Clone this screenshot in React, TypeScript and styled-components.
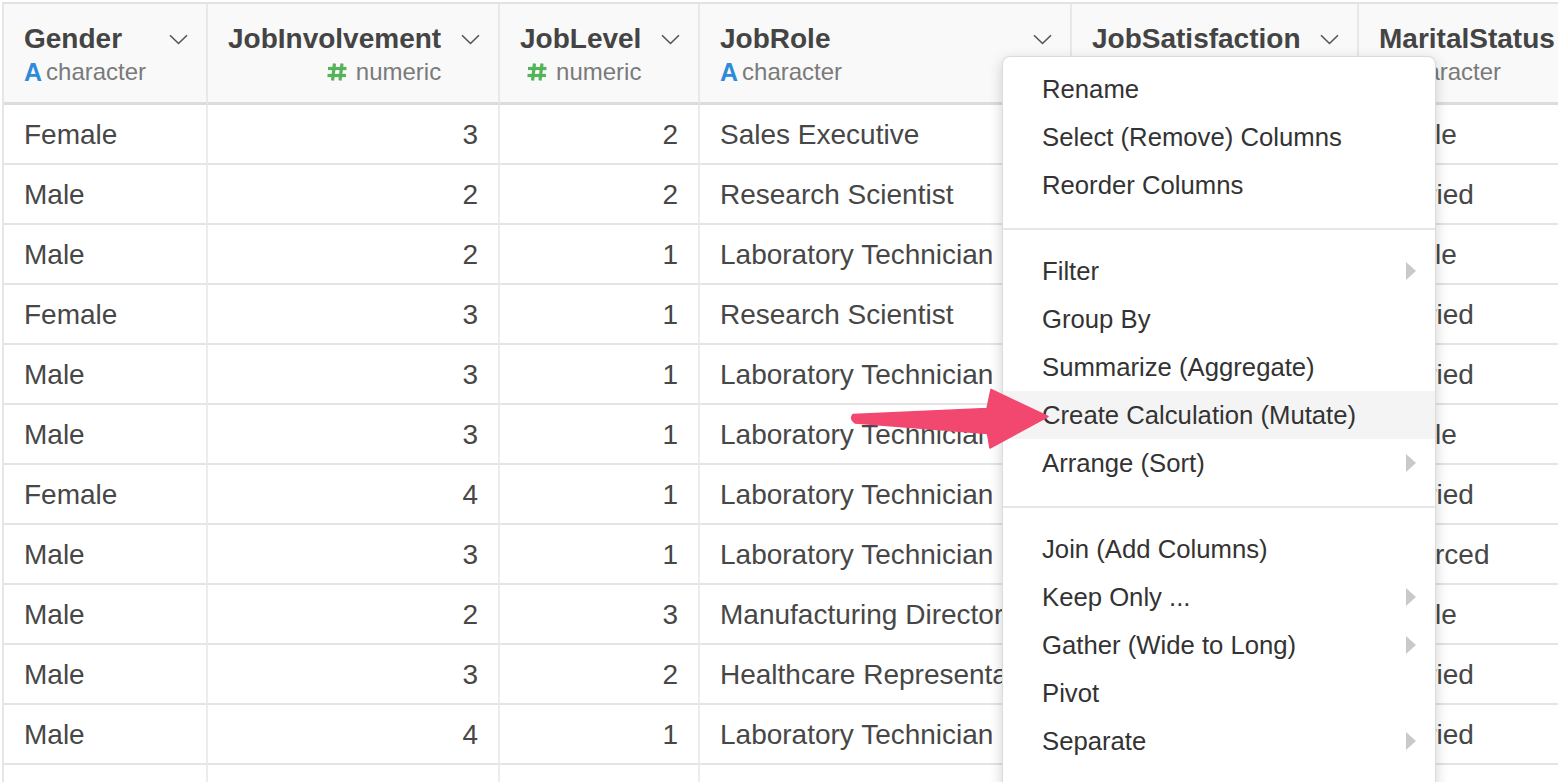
import React from 'react'
import styled, { createGlobalStyle } from 'styled-components'

const GlobalStyle = createGlobalStyle`
  body {
    margin: 0;
    font-family: "Liberation Sans", Arial, Helvetica, sans-serif;
    background: #fff;
  }
`

const Screen = styled.div`
  position: relative;
  width: 1558px;
  height: 782px;
  overflow: hidden;
  box-sizing: border-box;
  padding: 2px 0 0 2px;
  background: #fff;
`

const Grid = styled.div`
  width: 1760px;
  border-top: 2px solid #e2e2e2;
  border-left: 2px solid #e6e6e6;
`

const HeaderRow = styled.div`
  display: flex;
`

const HeadCell = styled.div<{ $w: number }>`
  flex: 0 0 ${(p) => p.$w}px;
  box-sizing: border-box;
  height: 101px;
  display: flex;
  justify-content: space-between;
  align-items: flex-start;
  padding: 19px 18px 0 20px;
  background: #f9f9f9;
  border-right: 2px solid #e8e8e8;
  border-bottom: 3px solid #dcdcdc;
  overflow: hidden;
`

const TitleBlock = styled.div<{ $numeric: boolean }>`
  display: flex;
  flex-direction: column;
  align-items: ${(p) => (p.$numeric ? 'flex-end' : 'flex-start')};
`

const Title = styled.div`
  font-size: 28px;
  line-height: 32px;
  font-weight: bold;
  color: #444;
  white-space: nowrap;
`

const TypeLabel = styled.div`
  display: flex;
  align-items: center;
  margin-top: 3px;
  font-size: 24px;
  line-height: 28px;
  color: #7a7a7a;
  white-space: nowrap;
`

const CharIcon = styled.span`
  font-size: 25px;
  font-weight: bold;
  color: #2d8bd8;
  margin-right: 4px;
`

const NumIcon = styled.svg`
  width: 20px;
  height: 18px;
  margin-right: 9px;
`

const Chevron = styled.svg`
  flex: 0 0 auto;
  width: 19px;
  height: 11px;
  margin-top: 11px;
`

const Row = styled.div`
  display: flex;
`

const Cell = styled.div<{ $w: number; $numeric?: boolean }>`
  flex: 0 0 ${(p) => p.$w}px;
  box-sizing: border-box;
  height: 60px;
  padding: 1px 20px 0;
  line-height: 58px;
  font-size: 28px;
  color: #474747;
  text-align: ${(p) => (p.$numeric ? 'right' : 'left')};
  white-space: nowrap;
  overflow: hidden;
  border-right: 2px solid #ececec;
  border-bottom: 2px solid #e4e4e4;
`

const Menu = styled.div`
  position: absolute;
  left: 1002px;
  top: 56px;
  width: 434px;
  height: 780px;
  box-sizing: border-box;
  padding-top: 8px;
  background: #fff;
  border: 1px solid rgba(0, 0, 0, 0.14);
  border-radius: 8px;
  box-shadow: 0 4px 14px rgba(0, 0, 0, 0.18);
`

const MenuItem = styled.div<{ $active?: boolean }>`
  height: 48px;
  display: flex;
  align-items: center;
  justify-content: space-between;
  padding: 0 19px 0 39px;
  font-size: 25.7px;
  color: #333;
  background: ${(p) => (p.$active ? '#f4f4f4' : 'transparent')};
`

const Caret = styled.span`
  width: 0;
  height: 0;
  border-left: 10px solid #c9c9c9;
  border-top: 9px solid transparent;
  border-bottom: 9px solid transparent;
`

const Separator = styled.div`
  height: 2px;
  margin: 19px 0 17px;
  background: #e6e6e6;
`

const Pointer = styled.svg`
  position: absolute;
  left: 0;
  top: 0;
  width: 1558px;
  height: 782px;
  pointer-events: none;
`

type Col = { name: string; w: number; numeric: boolean }

const columns: Col[] = [
  { name: 'Gender', w: 204, numeric: false },
  { name: 'JobInvolvement', w: 292, numeric: true },
  { name: 'JobLevel', w: 200, numeric: true },
  { name: 'JobRole', w: 372, numeric: false },
  { name: 'JobSatisfaction', w: 287, numeric: true },
  { name: 'MaritalStatus', w: 403, numeric: false },
]

const rows: (string | number)[][] = [
  ['Female', 3, 2, 'Sales Executive', 4, 'Single'],
  ['Male', 2, 2, 'Research Scientist', 2, 'Married'],
  ['Male', 2, 1, 'Laboratory Technician', 3, 'Single'],
  ['Female', 3, 1, 'Research Scientist', 3, 'Married'],
  ['Male', 3, 1, 'Laboratory Technician', 2, 'Married'],
  ['Male', 3, 1, 'Laboratory Technician', 4, 'Single'],
  ['Female', 4, 1, 'Laboratory Technician', 1, 'Married'],
  ['Male', 3, 1, 'Laboratory Technician', 3, 'Divorced'],
  ['Male', 2, 3, 'Manufacturing Director', 3, 'Single'],
  ['Male', 3, 2, 'Healthcare Representative', 3, 'Married'],
  ['Male', 4, 1, 'Laboratory Technician', 2, 'Married'],
  ['', '', '', '', '', ''],
]

type Item = { label: string; sub?: boolean; active?: boolean }

const menuGroups: Item[][] = [
  [{ label: 'Rename' }, { label: 'Select (Remove) Columns' }, { label: 'Reorder Columns' }],
  [
    { label: 'Filter', sub: true },
    { label: 'Group By' },
    { label: 'Summarize (Aggregate)' },
    { label: 'Create Calculation (Mutate)', active: true },
    { label: 'Arrange (Sort)', sub: true },
  ],
  [
    { label: 'Join (Add Columns)' },
    { label: 'Keep Only ...', sub: true },
    { label: 'Gather (Wide to Long)', sub: true },
    { label: 'Pivot' },
    { label: 'Separate', sub: true },
  ],
]

function TypeTag({ numeric }: { numeric: boolean }) {
  if (numeric) {
    return (
      <TypeLabel>
        <NumIcon viewBox="0 0 20 18">
          <g stroke="#55b45a" strokeWidth="3.2" strokeLinecap="butt">
            <line x1="7.5" y1="0.5" x2="5.5" y2="17.5" />
            <line x1="15" y1="0.5" x2="13" y2="17.5" />
            <line x1="1" y1="5.5" x2="19.5" y2="5.5" />
            <line x1="0.5" y1="12.5" x2="19" y2="12.5" />
          </g>
        </NumIcon>
        numeric
      </TypeLabel>
    )
  }
  return (
    <TypeLabel>
      <CharIcon>A</CharIcon>
      character
    </TypeLabel>
  )
}

function ColumnHeader({ col }: { col: Col }) {
  return (
    <HeadCell $w={col.w}>
      <TitleBlock $numeric={col.numeric}>
        <Title>{col.name}</Title>
        <TypeTag numeric={col.numeric} />
      </TitleBlock>
      <Chevron viewBox="0 0 19 11">
        <path d="M1 1.2 L9.5 9.5 L18 1.2" fill="none" stroke="#555" strokeWidth="1.6" />
      </Chevron>
    </HeadCell>
  )
}

function ColumnMenu() {
  return (
    <Menu>
      {menuGroups.map((group, gi) => (
        <React.Fragment key={gi}>
          {gi > 0 && <Separator />}
          {group.map((item) => (
            <MenuItem key={item.label} $active={item.active}>
              {item.label}
              {item.sub && <Caret />}
            </MenuItem>
          ))}
        </React.Fragment>
      ))}
    </Menu>
  )
}

export default function App() {
  return (
    <>
      <GlobalStyle />
      <Screen>
        <Grid>
          <HeaderRow>
            {columns.map((col) => (
              <ColumnHeader key={col.name} col={col} />
            ))}
          </HeaderRow>
          {rows.map((row, ri) => (
            <Row key={ri}>
              {row.map((value, ci) => (
                <Cell key={ci} $w={columns[ci].w} $numeric={columns[ci].numeric}>
                  {value}
                </Cell>
              ))}
            </Row>
          ))}
        </Grid>
        <ColumnMenu />
        <Pointer viewBox="0 0 1558 782">
          <path
            d="M853 414.5 L987 408.5 L991 389.5 L1048 416.5 L990 448 L987.5 433.5 L855 423 Q849.5 419 853 414.5 Z"
            fill="#f2486f"
            stroke="#f2486f"
            strokeWidth="1.5"
            strokeLinejoin="round"
          />
        </Pointer>
      </Screen>
    </>
  )
}
